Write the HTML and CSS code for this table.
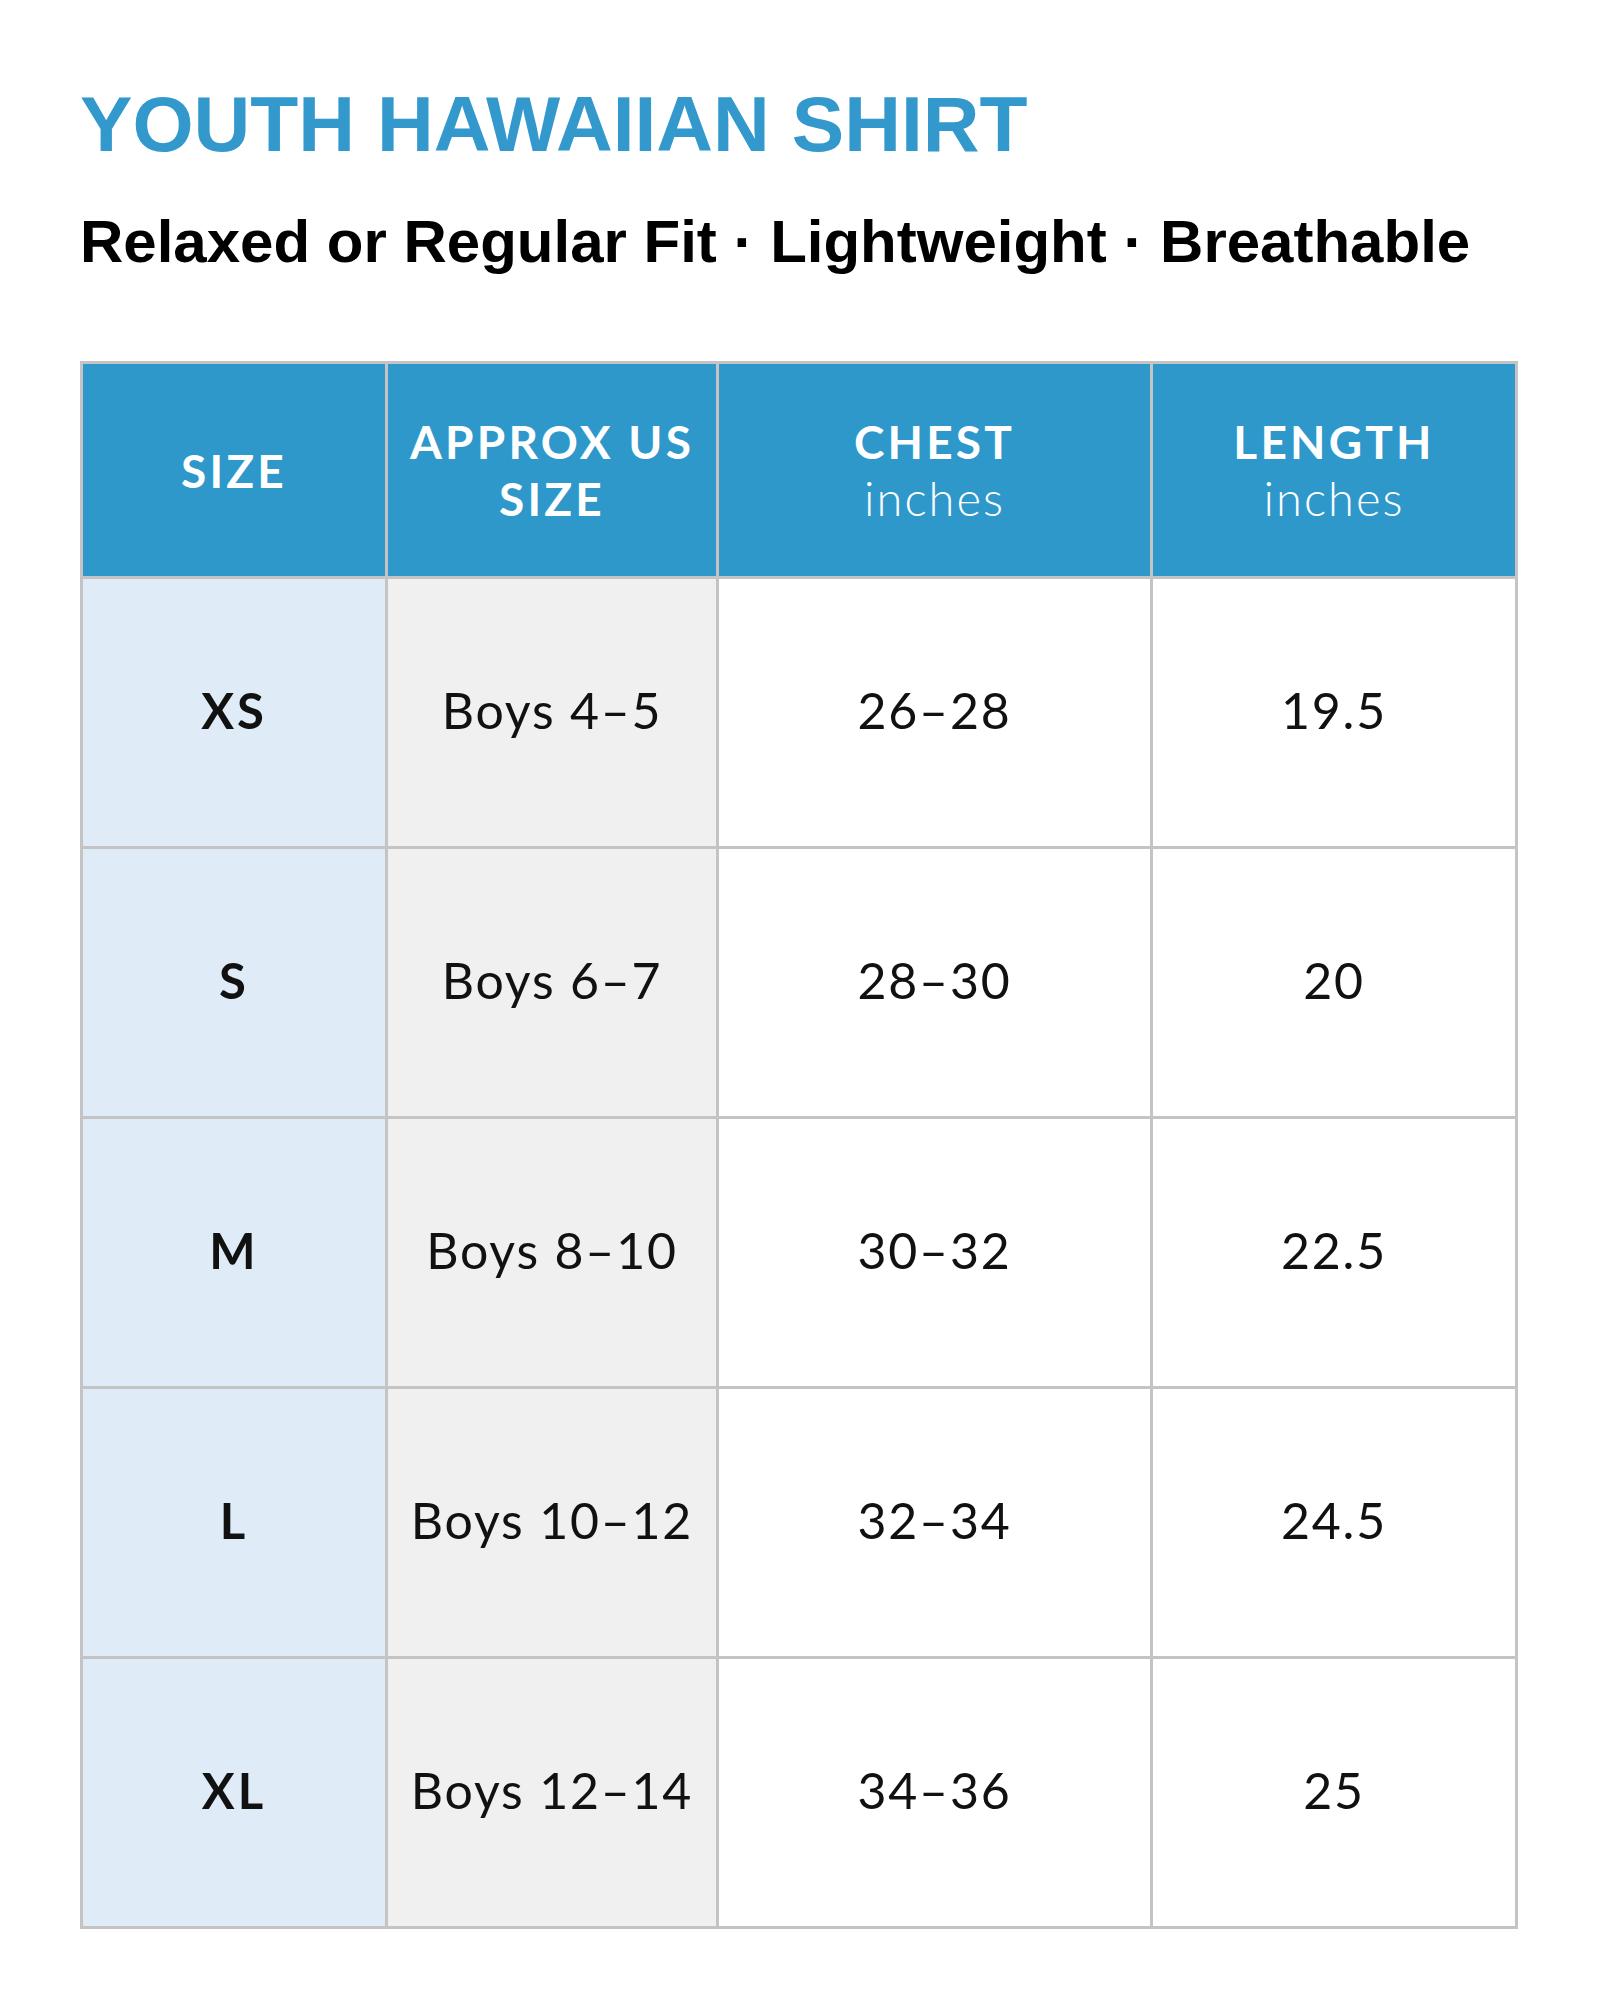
FILE: index.html
```html
<!DOCTYPE html>
<html lang="en">
<head>
<meta charset="utf-8">
<title>Youth Hawaiian Shirt Size Chart</title>
<link rel="stylesheet" href="styles.css">
</head>
<body>
<main class="page">
  <h1 class="title">YOUTH HAWAIIAN SHIRT</h1>
  <p class="subtitle">Relaxed or Regular Fit · Lightweight · Breathable</p>
  <div class="chart">
    <div class="cell head"><span class="label">SIZE</span></div>
    <div class="cell head"><span class="label">APPROX US<br>SIZE</span></div>
    <div class="cell head"><span class="label">CHEST<br><span class="unit">inches</span></span></div>
    <div class="cell head"><span class="label">LENGTH<br><span class="unit">inches</span></span></div>

    <div class="cell size">XS</div>
    <div class="cell approx">Boys 4–5</div>
    <div class="cell val">26–28</div>
    <div class="cell val">19.5</div>

    <div class="cell size">S</div>
    <div class="cell approx">Boys 6–7</div>
    <div class="cell val">28–30</div>
    <div class="cell val">20</div>

    <div class="cell size">M</div>
    <div class="cell approx">Boys 8–10</div>
    <div class="cell val">30–32</div>
    <div class="cell val">22.5</div>

    <div class="cell size">L</div>
    <div class="cell approx">Boys 10–12</div>
    <div class="cell val">32–34</div>
    <div class="cell val">24.5</div>

    <div class="cell size">XL</div>
    <div class="cell approx">Boys 12–14</div>
    <div class="cell val">34–36</div>
    <div class="cell val">25</div>
  </div>
</main>
</body>
</html>
```
FILE: styles.css
```css
html, body {
  margin: 0;
  padding: 0;
  background: #ffffff;
}

.page {
  padding: 84px 0 0 80px;
}

.title {
  margin: 0;
  font-family: "Liberation Sans", Arial, sans-serif;
  font-weight: 700;
  font-size: 78.6px;
  line-height: 80px;
  color: #3399cc;
}

.subtitle {
  margin: 48px 0 0 0;
  font-family: "Liberation Sans", Arial, sans-serif;
  font-weight: 700;
  font-size: 60px;
  line-height: 60px;
  color: #000000;
}

.chart {
  margin-top: 89px;
  width: 1432px;
  display: grid;
  grid-template-columns: 302px 328px 431px 362px;
  grid-template-rows: 212px repeat(5, 267px);
  gap: 3px;
  padding: 3px;
  background: #c4c4c4;
  font-family: "Lato", "Open Sans", sans-serif;
}

.cell {
  display: flex;
  align-items: center;
  justify-content: center;
  text-align: center;
  background: #ffffff;
  color: #111111;
  font-size: 50px;
  letter-spacing: 1.8px;
  padding-bottom: 6px;
  box-sizing: border-box;
}

.head {
  background: #2e98cb;
  color: #ffffff;
  padding-bottom: 0;
}

.label {
  display: block;
  font-weight: 700;
  font-size: 46px;
  line-height: 57px;
  letter-spacing: 3.2px;
}

.unit {
  font-weight: 300;
  font-size: 47px;
  letter-spacing: 2px;
}

.size {
  background: #dfebf6;
  font-weight: 700;
  font-size: 49px;
  letter-spacing: 3px;
}

.approx {
  background: #f0f0f0;
  font-weight: 400;
}

.val {
  font-weight: 400;
}
```
